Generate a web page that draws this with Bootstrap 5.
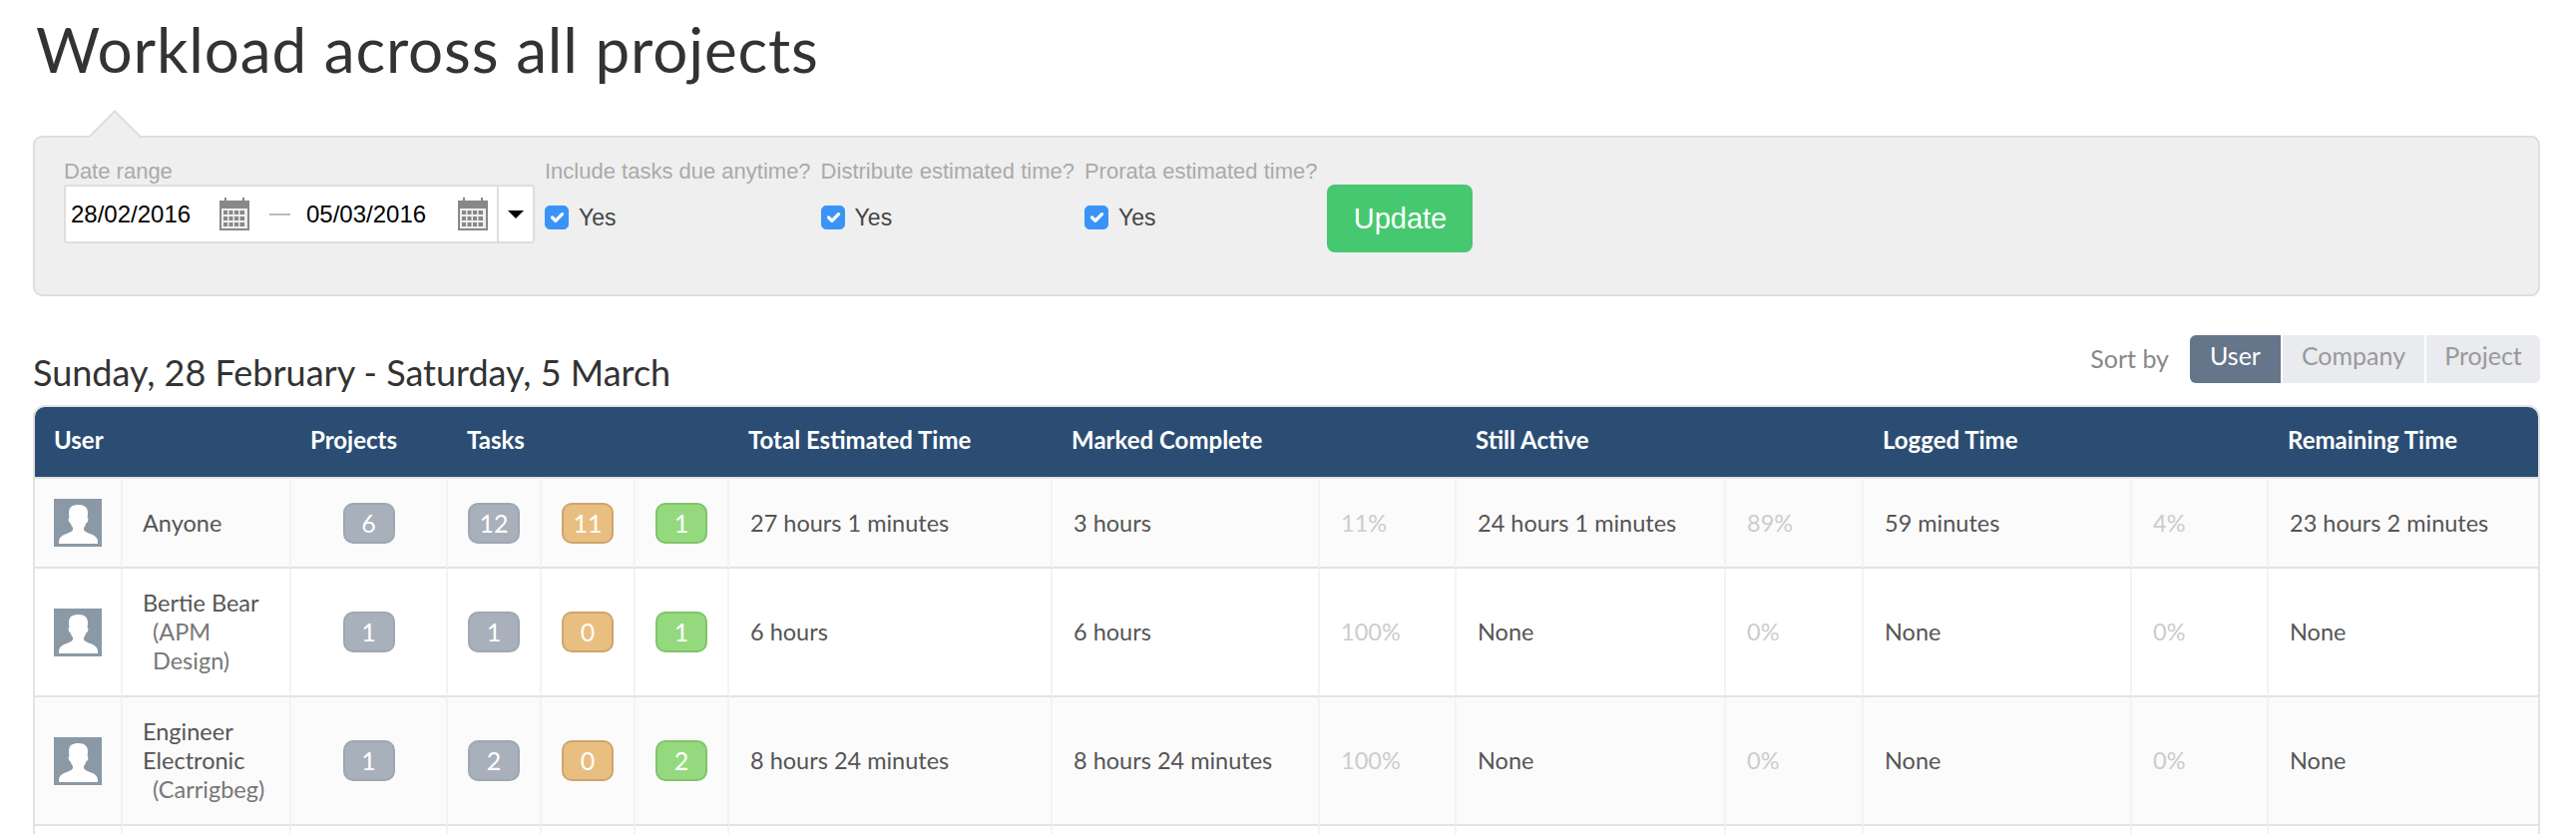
<!DOCTYPE html>
<html lang="en">
<head>
<meta charset="utf-8">
<title>Workload across all projects</title>
<link href="https://cdn.jsdelivr.net/npm/bootstrap@5.3.0/dist/css/bootstrap.min.css" rel="stylesheet">
<style>
html,body{height:836px;overflow:hidden;background:#fff}
body{font-family:Lato,"Liberation Sans",sans-serif;color:#555}
.page-wrap{padding:0 36px 0 33px;height:836px;overflow:hidden}
.page-title{font-family:Lato,sans-serif;font-size:62px;font-weight:400;line-height:72px;color:#333;margin:13px 0 0 3px;padding:0;height:72px;letter-spacing:.85px}
.filter-panel{position:relative;margin-top:51px;height:161px;background:#efefef;border:2px solid #dedede;border-radius:9px;padding:20px 29px;font-family:"Liberation Sans",sans-serif;gap:10px}
.filter-panel::before,.filter-panel::after{content:"";position:absolute;width:0;height:0;border-style:solid;border-color:transparent}
.filter-panel::before{left:53px;top:-28px;border-width:0 27px 27px;border-bottom-color:#dedede}
.filter-panel::after{left:55px;top:-25px;border-width:0 25px 25px;border-bottom-color:#efefef}
.field-label{font-size:22px;line-height:27px;color:#aaa;white-space:nowrap;display:block;margin:0}
.date-box{display:flex;height:59px;width:472px;background:#fff;border:2px solid #dedede;border-radius:3px;color:#000;font-size:24px}
.date-cell{width:196px;display:flex;align-items:center;justify-content:space-between;padding:0 12px 0 5px;flex:none}
.date-gap{width:40px;flex:none;display:flex;align-items:center;justify-content:center;padding-right:4px}
.date-gap i{display:block;width:21px;height:2px;background:#bbb}
.date-cell.second{border-right:2px solid #dedede;width:198px;padding-right:9px}
.date-drop{flex:1;display:flex;align-items:center;justify-content:center}
.yes-row{display:flex;align-items:center;gap:10px;height:48px;margin-top:9px;font-size:23px;color:#444}
.yes-row .form-check-input{width:24px;height:24px;margin:0;border-radius:5px;background-color:#3a94f7;border-color:#3a94f7;background-size:22px;flex:none}
.update-btn{font-size:29px;line-height:1;font-family:"Liberation Sans",sans-serif;background:#46c870;border:0;color:#fff;width:146px;height:68px;border-radius:8px;padding:0;margin-top:27px}
.section-row{margin-top:39px;height:48px;margin-bottom:22px}
.range-title{font-family:Lato,sans-serif;font-size:36px;font-weight:400;color:#333;margin:0;line-height:48px;padding-top:13px}
.sort-label{font-size:25px;color:#888;margin-right:21px;padding-top:5px}
.sort-btn{height:48px;border:0;background:#e9ebef;color:#999;font-size:25px;line-height:1;padding:0 0 7px;margin-left:2px;font-family:Lato,sans-serif}
.sort-btn.on{background:#65758a;color:#fff;margin-left:0;border-radius:6px 0 0 6px;width:91px}
.sort-company{width:142px}
.sort-project{width:114px;border-radius:0 6px 6px 0}
.table-shell{border:2px solid #e3e3e3;border-bottom:0;border-radius:12px 12px 0 0;overflow:hidden;width:2513px}
.work-table{table-layout:fixed;width:2509px;border-collapse:separate;border-spacing:0;margin:0;font-size:23.5px}
.work-table th{background:#2b4d73;color:#fff;font-weight:700;height:72px;padding:0 20px 5px 19px;border-bottom:2px solid #e3e3e3;white-space:nowrap;font-size:24px;vertical-align:middle;box-shadow:none}
.work-table td{padding:20px 20px 20px 21px;border-bottom:2px solid #e3e3e3;border-right:2px solid #f3f3f3;vertical-align:middle;color:#555;line-height:29px;white-space:nowrap;box-shadow:none;background:#fff}
.work-table td:last-child{border-right:0}
.work-table tr.alt td{background:#fbfbfb}
.work-table td.name-cell{white-space:normal;padding:20px 10px 20px 20px}
.work-table td.pct-cell{color:#ccc}
.work-table td.mid-cell{padding:0;text-align:center}
.row-one td{height:90px;padding-top:0!important;padding-bottom:0!important}
.company-name{color:#777;margin-left:10px;display:inline-block}
.avatar-box{width:48px;height:48px;display:block;background:#8a99a5}
.work-table td.avatar-cell{padding:0 0 0 19px}
.num-pill{display:inline-block;width:52px;height:41px;line-height:37px;border-radius:10px;border:2px solid;color:#fff;font-size:25px;text-align:center}
.pill-grey{background:#a8b0bc;border-color:#9ea7b3}
.pill-orange{background:#e8bf80;border-color:#d0a46c}
.pill-green{background:#95d97e;border-color:#80c36c}
.c1{width:88px}.c2{width:169px}.c3{width:157px}.c4{width:94px}.c5{width:324px}.c6{width:268px}.c7{width:137px}.c8{width:270px}.c9{width:138px}.c10{width:269px}
</style>
</head>
<body>
<svg width="0" height="0" class="d-block" aria-hidden="true">
  <defs>
    <symbol id="cal" viewBox="0 0 30 33">
      <path fill="#888" d="M0 3h5V0h2v3h16V0h2v3h5v30H0z"/>
      <path fill="#efefef" d="M2 11h26v20H2z"/>
      <path fill="#888" d="M4 13h4v4H4zM9.500 13h4v4h-4zM15 13h4v4h-4zM20.500 13h4.500v4h-4.500zM4 19h4v4H4zM9.500 19h4v4h-4zM15 19h4v4h-4zM20.500 19h4.500v4h-4.500zM4 25h4v4H4zM9.500 25h4v4h-4zM15 25h4v4h-4zM20.500 25h4.500v4h-4.500z"/>
    </symbol>
    <symbol id="person" viewBox="0 0 48 48">
      <rect width="48" height="48" fill="#8a99a5"/>
      <path fill="#fff" d="M24 6c-2 0-3 .6-4 .8-3 .4-5 3-5 7.200 0 2 .3 3.600.4 5-.8.400-1 1.600-.6 3 .4 1.400 1 2 1.800 2.200.6 2 1.400 3.600 2.400 4.800v1.600c0 1.600-2 3-6 4.400-5 1.600-7.600 3.600-8 7.600V45h39v-2.400c-.4-4-3-6-8-7.600-4-1.400-6-2.800-6-4.400V29c1-1.200 1.800-2.800 2.400-4.800.8-.2 1.400-.8 1.800-2.200.4-1.400.2-2.600-.6-3 .1-1.400.4-3 .4-5 0-5-3-8-9.400-8z"/>
    </symbol>
  </defs>
</svg>
<div class="page-wrap">
  <h1 class="page-title">Workload across all projects</h1>

  <form class="filter-panel d-flex align-items-start">
    <div>
      <label class="field-label">Date range</label>
      <div class="date-box">
        <div class="date-cell"><span>28/02/2016</span><svg width="30" height="33"><use href="#cal"/></svg></div>
        <div class="date-gap"><i></i></div>
        <div class="date-cell second"><span>05/03/2016</span><svg width="30" height="33"><use href="#cal"/></svg></div>
        <div class="date-drop"><svg width="16" height="8" viewBox="0 0 16 8"><path d="M0 0h16L8 8z" fill="#000"/></svg></div>
      </div>
    </div>
    <div>
      <label class="field-label">Include tasks due anytime?</label>
      <div class="yes-row"><input class="form-check-input" type="checkbox" checked><span>Yes</span></div>
    </div>
    <div>
      <label class="field-label">Distribute estimated time?</label>
      <div class="yes-row"><input class="form-check-input" type="checkbox" checked><span>Yes</span></div>
    </div>
    <div>
      <label class="field-label">Prorata estimated time?</label>
      <div class="yes-row"><input class="form-check-input" type="checkbox" checked><span>Yes</span></div>
    </div>
    <button type="button" class="btn update-btn">Update</button>
  </form>

  <div class="section-row d-flex justify-content-between align-items-start">
    <h2 class="range-title">Sunday, 28 February - Saturday, 5 March</h2>
    <div class="d-flex align-items-start">
      <span class="sort-label">Sort by</span>
      <button type="button" class="sort-btn on">User</button>
      <button type="button" class="sort-btn sort-company">Company</button>
      <button type="button" class="sort-btn sort-project">Project</button>
    </div>
  </div>

  <div class="table-shell">
    <table class="table work-table">
      <colgroup>
        <col class="c1"><col class="c2"><col class="c3"><col class="c4"><col class="c4"><col class="c4"><col class="c5"><col class="c6"><col class="c7"><col class="c8"><col class="c9"><col class="c10"><col class="c7"><col class="c8">
      </colgroup>
      <thead>
        <tr>
          <th colspan="2">User</th><th>Projects</th><th colspan="3">Tasks</th><th>Total Estimated Time</th><th colspan="2">Marked Complete</th><th colspan="2">Still Active</th><th colspan="2">Logged Time</th><th>Remaining Time</th>
        </tr>
      </thead>
      <tbody>
        <tr class="alt row-one">
          <td class="avatar-cell"><svg class="avatar-box"><use href="#person"/></svg></td>
          <td class="name-cell">Anyone</td>
          <td class="mid-cell"><span class="num-pill pill-grey">6</span></td>
          <td class="mid-cell"><span class="num-pill pill-grey">12</span></td>
          <td class="mid-cell"><span class="num-pill pill-orange">11</span></td>
          <td class="mid-cell"><span class="num-pill pill-green">1</span></td>
          <td>27 hours 1 minutes</td><td>3 hours</td><td class="pct-cell">11%</td><td>24 hours 1 minutes</td><td class="pct-cell">89%</td><td>59 minutes</td><td class="pct-cell">4%</td><td>23 hours 2 minutes</td>
        </tr>
        <tr>
          <td class="avatar-cell"><svg class="avatar-box"><use href="#person"/></svg></td>
          <td class="name-cell">Bertie Bear<br><span class="company-name">(APM<br>Design)</span></td>
          <td class="mid-cell"><span class="num-pill pill-grey">1</span></td>
          <td class="mid-cell"><span class="num-pill pill-grey">1</span></td>
          <td class="mid-cell"><span class="num-pill pill-orange">0</span></td>
          <td class="mid-cell"><span class="num-pill pill-green">1</span></td>
          <td>6 hours</td><td>6 hours</td><td class="pct-cell">100%</td><td>None</td><td class="pct-cell">0%</td><td>None</td><td class="pct-cell">0%</td><td>None</td>
        </tr>
        <tr class="alt">
          <td class="avatar-cell"><svg class="avatar-box"><use href="#person"/></svg></td>
          <td class="name-cell">Engineer<br>Electronic<br><span class="company-name">(Carrigbeg)</span></td>
          <td class="mid-cell"><span class="num-pill pill-grey">1</span></td>
          <td class="mid-cell"><span class="num-pill pill-grey">2</span></td>
          <td class="mid-cell"><span class="num-pill pill-orange">0</span></td>
          <td class="mid-cell"><span class="num-pill pill-green">2</span></td>
          <td>8 hours 24 minutes</td><td>8 hours 24 minutes</td><td class="pct-cell">100%</td><td>None</td><td class="pct-cell">0%</td><td>None</td><td class="pct-cell">0%</td><td>None</td>
        </tr>
        <tr>
          <td style="height:90px"></td><td></td><td></td><td></td><td></td><td></td><td></td><td></td><td></td><td></td><td></td><td></td><td></td><td></td>
        </tr>
      </tbody>
    </table>
  </div>
</div>
<script src="https://cdn.jsdelivr.net/npm/bootstrap@5.3.0/dist/js/bootstrap.bundle.min.js"></script>
</body>
</html>
